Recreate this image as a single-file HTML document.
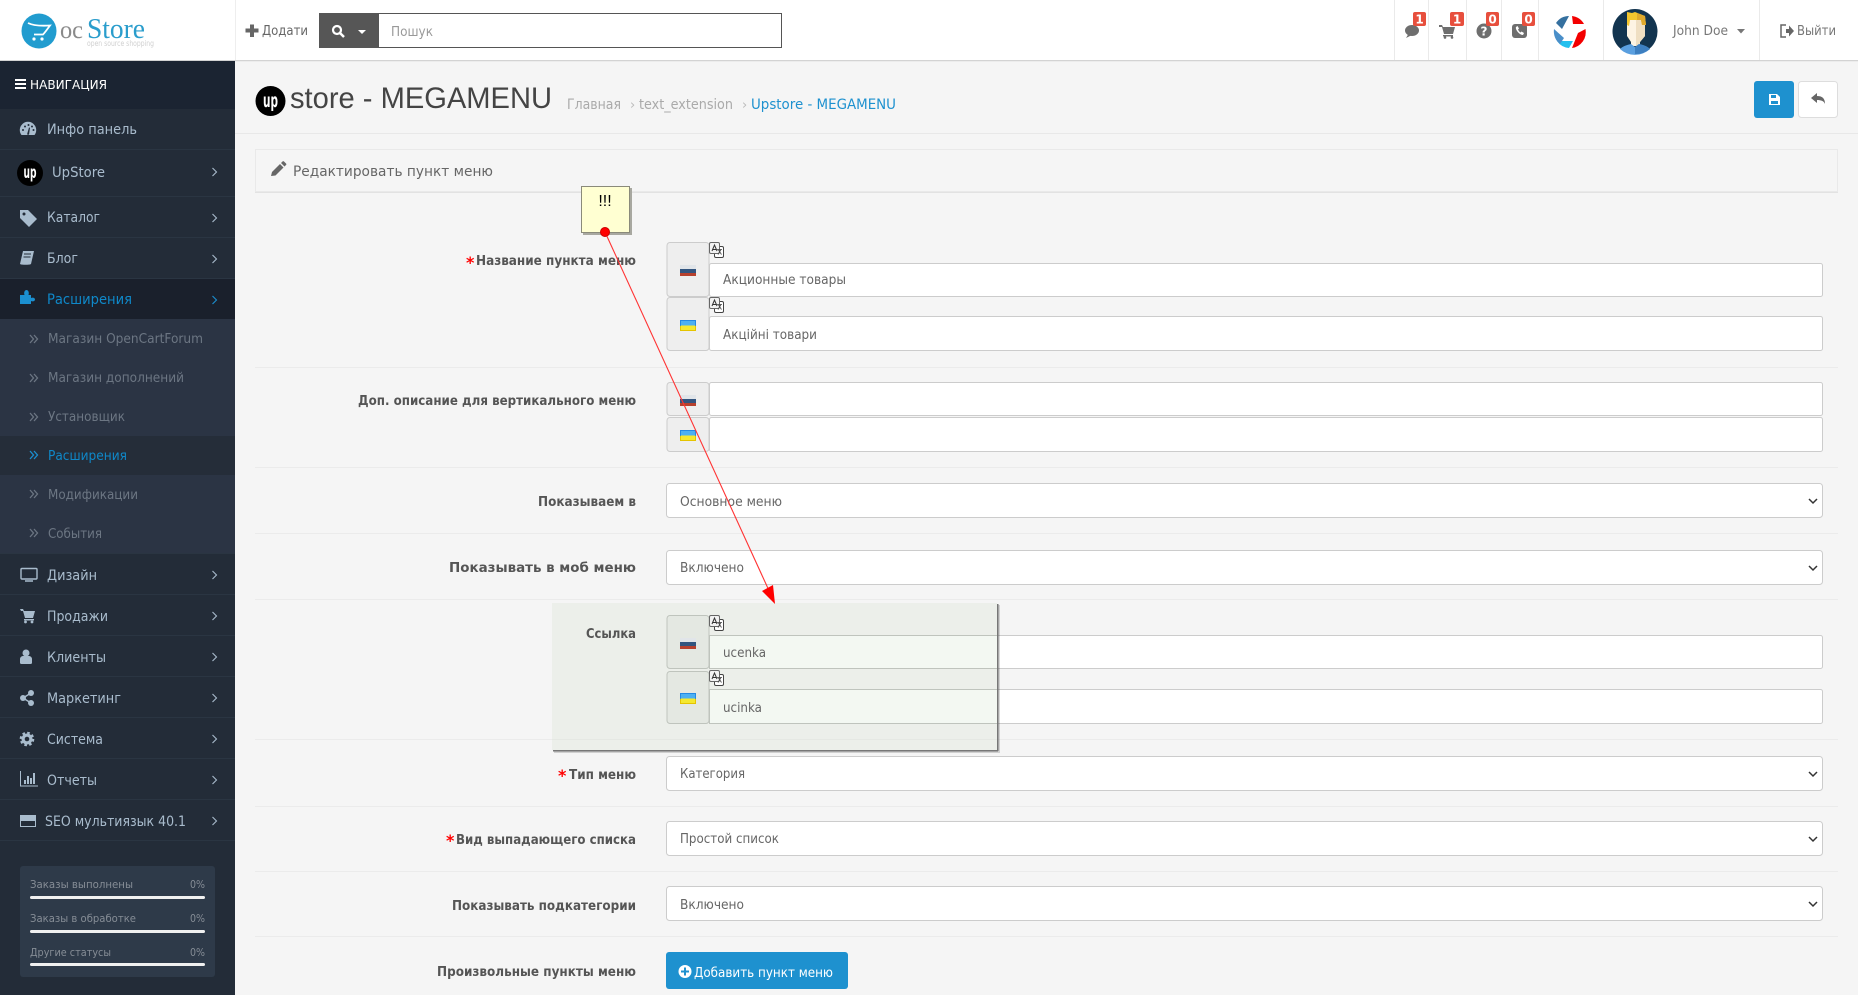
<!DOCTYPE html>
<html lang="ru">
<head>
<meta charset="utf-8">
<title>Upstore - MEGAMENU</title>
<style>
html,body{margin:0;padding:0;width:1858px;height:995px;overflow:hidden;background:#f5f5f5}
svg{display:block}
text{font-family:"DejaVu Sans","Liberation Sans",sans-serif;font-size:13px;fill:#666}
.m{font-size:14px;fill:#a9bccd}
.s{font-size:13px;fill:#6c7683}
.st{font-size:11px;fill:#868d96}
.b{font-weight:bold;font-size:13px;fill:#555}
.r{font-weight:bold;font-size:16px;fill:#f00}
.f{font-size:13px;fill:#666}
.bd{font-size:12px;font-weight:bold;fill:#fff}
.i{fill:#a9bccd}
.h{fill:#6e6e6e}
.inp{fill:#fff;stroke:#ccc}
.ad{fill:#eee;stroke:#ccc}
.sep{fill:#eaeaea}
.ms{fill:#2a3542}
.chev{fill:none;stroke:#a9bccd;stroke-width:1.1}
.ddd{fill:none;stroke:#6c7683;stroke-width:1.3}
</style>
</head>
<body>
<svg xmlns="http://www.w3.org/2000/svg" width="1858" height="995" viewBox="0 0 1858 995">
<defs>
<g id="ru"><rect width="16" height="4" fill="#e1e5e9"/><rect y="4" width="16" height="4" fill="#33557f"/><rect y="8" width="16" height="3" fill="#b6412e"/></g>
<g id="ua"><rect width="16" height="11" fill="#f4e82f"/><rect width="16" height="5.500" fill="#4cb0f2"/><rect x=".5" y=".5" width="15" height="10" fill="none" stroke="#1a7fe0" stroke-opacity=".8"/><path d="M.5 6v4.500h15V6" fill="none" stroke="#e5c400"/></g>
<g id="tr"><rect x="5.500" y="4.500" width="9" height="11" rx="1.500" fill="#fff" stroke="#444"/><rect x=".5" y=".5" width="10" height="11" rx="1.500" fill="#f2f2f2" stroke="#666"/><path d="M3 9l2.500-6 2.500 6M3.800 7.500h3.500" fill="none" stroke="#333"/><path d="M8 7.500h5M12 7.500l-3 5M9.500 8l3 4.500" fill="none" stroke="#444" stroke-width=".8"/></g>
<path id="sel" d="M0 0l4 4 4-4" fill="none" stroke="#333" stroke-width="1.500"/>
</defs>

<!-- page background -->
<rect width="1858" height="995" fill="#f5f5f5"/>

<!-- header -->
<g id="header">
<rect width="1858" height="60" fill="#fff"/>
<rect y="60" width="1858" height="1" fill="#d3d3d3"/>
<rect y="61" width="1858" height="1" fill="#ececec"/>
<rect x="235" width="1" height="60" fill="#eee"/>
<circle cx="39" cy="31" r="17.500" fill="#219ccf"/>
<path d="M28 23c6 3 14 3 22 2.500-3 4-5 7-7 9h-9" fill="none" stroke="#fff" stroke-width="1.800"/>
<circle cx="34" cy="39" r="1.600" fill="#fff"/><circle cx="42" cy="39" r="1.600" fill="#fff"/>
<text x="60" y="38" textLength="23" lengthAdjust="spacingAndGlyphs" style="font-family:'Liberation Serif',serif;font-size:25px;fill:#8a8a8a">oc</text>
<text x="87" y="38" textLength="58" lengthAdjust="spacingAndGlyphs" style="font-family:'Liberation Serif',serif;font-size:29px;fill:#2a9dcc">Store</text>
<text x="87" y="46" textLength="67" lengthAdjust="spacingAndGlyphs" style="font-size:8px;fill:#d0d0d0">open source shopping</text>

<path d="M250 25h4v4h4.500v4H254v4.500h-4V33h-4.500v-4h4.500z" transform="translate(0 -.5)" fill="#666"/>
<text x="262" y="35" textLength="46" lengthAdjust="spacingAndGlyphs" style="fill:#666">Додати</text>
<rect x="319" y="13" width="59" height="35" fill="#565656"/>
<rect x="378.500" y="13.500" width="403" height="34" fill="#fff" stroke="#555"/>
<circle cx="337" cy="30" r="4" fill="none" stroke="#fff" stroke-width="2.200"/><path d="M340 33l4 4" stroke="#fff" stroke-width="2.500"/>
<path d="M358 30h8l-4 4z" fill="#fff"/>
<text x="391" y="36" textLength="42" lengthAdjust="spacingAndGlyphs" style="fill:#999">Пошук</text>

<g class="sep">
<rect x="1394" width="1" height="60"/><rect x="1428" width="1" height="60"/><rect x="1466" width="1" height="60"/><rect x="1501" width="1" height="60"/><rect x="1538" width="1" height="60"/><rect x="1603" width="1" height="60"/><rect x="1759" width="1" height="60"/>
</g>
<ellipse class="h" cx="1412" cy="30.500" rx="7" ry="5.500"/><path class="h" d="M1406 38l3-5 3 2z"/>
<path class="h" d="M1439 25h3l1 2h12l-2 7h-9l-2-7h-3z"/><rect class="h" x="1443" y="35" width="10" height="1.500"/><circle class="h" cx="1445" cy="37.500" r="1.300"/><circle class="h" cx="1452" cy="37.500" r="1.300"/>
<circle class="h" cx="1484" cy="31" r="7.500"/>
<text x="1484" y="35.500" text-anchor="middle" style="font-size:12px;font-weight:bold;fill:#fff">?</text>
<rect class="h" x="1512" y="24" width="15" height="14" rx="3"/>
<path d="M1516 27c-1 2 3 8 7 8l1-2-2.500-1.500-1 1c-1-.5-2-2-2.500-3l1-1-1.500-2.500z" fill="#fff"/>
<g fill="#e74f3d">
<rect x="1413" y="12" width="13" height="14" rx="2"/><rect x="1450" y="12" width="14" height="14" rx="2"/><rect x="1486" y="12" width="13" height="14" rx="2"/><rect x="1522" y="12" width="13" height="14" rx="2"/>
</g>
<text class="bd" x="1419.500" y="23.500" text-anchor="middle">1</text>
<text class="bd" x="1457" y="23.500" text-anchor="middle">1</text>
<text class="bd" x="1492.500" y="23.500" text-anchor="middle">0</text>
<text class="bd" x="1528.500" y="23.500" text-anchor="middle">0</text>

<!-- aperture logo -->
<path d="M1572 16A16 16 0 0 1 1584 24L1573 24Z" fill="#f30000"/>
<path d="M1585.500 29A16 16 0 0 1 1572 48L1578 33Z" fill="#f30000"/>
<path d="M1557 41L1573 41L1569 48A16 16 0 0 1 1557 41Z" fill="#24c0ee"/>
<path d="M1554 29L1564 38L1560 44A16 16 0 0 1 1554 29Z" fill="#4a8fc9"/>
<path d="M1556 23A16 16 0 0 1 1569 16L1562 29Z" fill="#35709f"/>

<!-- avatar -->
<circle cx="1635" cy="31.500" r="22.500" fill="#12344f"/>
<path d="M1627 17h18v19l-5 6v4h-9v-4l-4-6z" fill="#fdf4e3"/>
<path d="M1636 17h9v19l-5 6v4h-4z" fill="#efdfc2"/>
<path d="M1627 12l5 1 3-1 10 4 1 9h-4l-1-5-11 0-1 6-2-1z" fill="#f3c62e"/>
<path d="M1637 13l8 3 1 9h-4l-1-5h-4z" fill="#dfa92c"/>
<path d="M1620 49c3-3 7-4 11-5l4 3 4-3c4 1 8 2 11 5a22 22 0 0 1-30 0z" fill="#5a9fdf"/>
<path d="M1635 47l4-3c4 1 8 2 11 5a22 22 0 0 1-15 5z" fill="#3d7fc0"/>

<text x="1673" y="35" textLength="55" lengthAdjust="spacingAndGlyphs" style="fill:#777">John Doe</text>
<path d="M1737 29h8l-4 4.500z" fill="#777"/>
<path d="M1786 25h-5v12h5" fill="none" stroke="#666" stroke-width="1.500"/><path d="M1786 29h3v-3.500l5 5.500-5 5.500V33h-3z" fill="#666"/>
<text x="1797" y="35" textLength="39" lengthAdjust="spacingAndGlyphs" style="fill:#777">Выйти</text>
</g>

<!-- sidebar -->
<g id="sidebar">
<rect x="0" y="61" width="235" height="934" fill="#232c38"/>
<rect x="0" y="61" width="235" height="48" fill="#1b2432"/>
<rect x="15" y="79" width="11" height="2" fill="#fff"/><rect x="15" y="83" width="11" height="2" fill="#fff"/><rect x="15" y="87" width="11" height="2" fill="#fff"/>
<text x="30" y="89" textLength="77" lengthAdjust="spacingAndGlyphs" style="fill:#fff;font-size:12.500px">НАВИГАЦИЯ</text>

<rect class="ms" y="149" width="235" height="1"/><rect class="ms" y="196" width="235" height="1"/><rect class="ms" y="237" width="235" height="1"/><rect class="ms" y="278" width="235" height="1"/>
<rect y="279" width="235" height="40" fill="#1a202c"/>
<rect y="319" width="235" height="234" fill="#2b3444"/>
<rect y="436" width="235" height="39" fill="#252d39"/>
<rect class="ms" y="553" width="235" height="1"/><rect class="ms" y="594" width="235" height="1"/><rect class="ms" y="635" width="235" height="1"/><rect class="ms" y="676" width="235" height="1"/><rect class="ms" y="717" width="235" height="1"/><rect class="ms" y="758" width="235" height="1"/><rect class="ms" y="799" width="235" height="1"/><rect class="ms" y="840" width="235" height="1"/>

<!-- gauge -->
<path class="i" d="M21.500 135A8.200 8.200 0 1 1 34.500 135Z"/>
<g fill="#232c38"><circle cx="23" cy="130" r="1"/><circle cx="25" cy="126.500" r="1"/><circle cx="28.500" cy="125" r="1"/><circle cx="32" cy="126.500" r="1"/><circle cx="33.500" cy="130" r="1"/><path d="M27 134.500l2-7 1 .3-1 7z"/></g>
<text class="m" x="47" y="134" textLength="90" lengthAdjust="spacingAndGlyphs">Инфо панель</text>

<circle cx="30" cy="173" r="13" fill="#000"/>
<text x="30" y="178" text-anchor="middle" textLength="13" lengthAdjust="spacingAndGlyphs" style="fill:#fff;font-weight:bold;font-size:17px">up</text>
<text class="m" x="52" y="177" textLength="53" lengthAdjust="spacingAndGlyphs">UpStore</text>

<path class="i" d="M20 210h8l9 9-8 8-9-9z"/><circle cx="24" cy="214" r="1.500" fill="#232c38"/>
<text class="m" x="47" y="222" textLength="53" lengthAdjust="spacingAndGlyphs">Каталог</text>

<path class="i" d="M23 251h11l-3 13c-1 1-10 1-11 0z"/><path d="M24 254h7M23.500 257h7" stroke="#232c38"/>
<text class="m" x="47" y="263" textLength="31" lengthAdjust="spacingAndGlyphs">Блог</text>

<path d="M20 295h4.500c-1-3 .5-5 2-5s3 2 2 5h2.500v3c2-1 4 0 4 1.500s-2 2.500-4 1.500v3H20z" fill="#1b8fd0"/>
<text class="m" x="47" y="304" textLength="85" lengthAdjust="spacingAndGlyphs" style="fill:#0f88c9">Расширения</text>

<g class="chev">
<path d="M212.500 168l4 4-4 4"/><path d="M212.500 214l4 4-4 4"/><path d="M212.500 255l4 4-4 4"/>
<path d="M212.500 571l4 4-4 4"/><path d="M212.500 612l4 4-4 4"/><path d="M212.500 653l4 4-4 4"/><path d="M212.500 694l4 4-4 4"/><path d="M212.500 735l4 4-4 4"/><path d="M212.500 776l4 4-4 4"/><path d="M212.500 817l4 4-4 4"/>
</g>
<path d="M212.500 296l4 4-4 4" fill="none" stroke="#1b8fd0" stroke-width="1.100"/>

<g class="ddd">
<path d="M30 335l3.500 4-3.500 4M34 335l3.500 4-3.500 4"/>
<path d="M30 374l3.500 4-3.500 4M34 374l3.500 4-3.500 4"/>
<path d="M30 413l3.500 4-3.500 4M34 413l3.500 4-3.500 4"/>
<path d="M30 451l3.500 4-3.500 4M34 451l3.500 4-3.500 4" stroke="#1b8fd0"/>
<path d="M30 490l3.500 4-3.500 4M34 490l3.500 4-3.500 4"/>
<path d="M30 529l3.500 4-3.500 4M34 529l3.500 4-3.500 4"/>
</g>
<text class="s" x="48" y="343" textLength="155" lengthAdjust="spacingAndGlyphs">Магазин OpenCartForum</text>
<text class="s" x="48" y="382" textLength="136" lengthAdjust="spacingAndGlyphs">Магазин дополнений</text>
<text class="s" x="48" y="421" textLength="77" lengthAdjust="spacingAndGlyphs">Установщик</text>
<text class="s" x="48" y="460" textLength="79" lengthAdjust="spacingAndGlyphs" style="fill:#0f88c9">Расширения</text>
<text class="s" x="48" y="499" textLength="90" lengthAdjust="spacingAndGlyphs">Модификации</text>
<text class="s" x="48" y="538" textLength="54" lengthAdjust="spacingAndGlyphs">События</text>

<rect x="21" y="568.500" width="16" height="10.500" rx="1" fill="none" stroke="#a9bccd" stroke-width="1.400"/><path d="M25 581h8" stroke="#a9bccd" stroke-width="1.500"/>
<text class="m" x="47" y="580" textLength="50" lengthAdjust="spacingAndGlyphs">Дизайн</text>

<path class="i" d="M20 609h3l1 2h11l-2 7h-8l-2-7h-2z"/><rect class="i" x="24" y="619" width="10" height="1.500"/><circle class="i" cx="25.500" cy="622" r="1.400"/><circle class="i" cx="32" cy="622" r="1.400"/>
<text class="m" x="47" y="621" textLength="61" lengthAdjust="spacingAndGlyphs">Продажи</text>

<circle class="i" cx="26" cy="653" r="3.500"/><path class="i" d="M20 664v-4c0-2 2-3 3-3h6c1 0 3 1 3 3v4c0 .7-1 1-2 1h-8c-1 0-2-.3-2-1z" transform="translate(0 -1)"/>
<text class="m" x="47" y="662" textLength="59" lengthAdjust="spacingAndGlyphs">Клиенты</text>

<circle class="i" cx="23" cy="698" r="3"/><circle class="i" cx="31" cy="693" r="3"/><circle class="i" cx="31" cy="703" r="3"/><path d="M23 698l8-5M23 698l8 5" stroke="#a9bccd" stroke-width="1.400"/>
<text class="m" x="47" y="703" textLength="74" lengthAdjust="spacingAndGlyphs">Маркетинг</text>

<circle class="i" cx="27" cy="739" r="5.500"/>
<circle cx="27" cy="739" r="6.200" fill="none" stroke="#a9bccd" stroke-width="2.200" stroke-dasharray="2.600 2.270"/>
<circle cx="27" cy="739" r="2.300" fill="#232c38"/>
<text class="m" x="47" y="744" textLength="56" lengthAdjust="spacingAndGlyphs">Система</text>

<path d="M20.500 771v15H38" fill="none" stroke="#a9bccd"/>
<g class="i"><rect x="24" y="780" width="2" height="4"/><rect x="27" y="776" width="2" height="8"/><rect x="30" y="778" width="2" height="6"/><rect x="33" y="773" width="2" height="11"/></g>
<text class="m" x="47" y="785" textLength="50" lengthAdjust="spacingAndGlyphs">Отчеты</text>

<rect x="20" y="815" width="16" height="6" fill="#a9bccd"/><rect x="20.500" y="815.500" width="15" height="11" fill="none" stroke="#a9bccd"/>
<text class="m" x="45" y="826" textLength="141" lengthAdjust="spacingAndGlyphs">SEO мультиязык 40.1</text>

<rect x="20" y="866" width="195" height="111" rx="3" fill="#2e3a49"/>
<text class="st" x="30" y="888" textLength="103" lengthAdjust="spacingAndGlyphs">Заказы выполнены</text>
<text class="st" x="190" y="888" textLength="15" lengthAdjust="spacingAndGlyphs">0%</text>
<rect x="30" y="896" width="175" height="3" rx="1.500" fill="#f0f0f0"/>
<text class="st" x="30" y="922" textLength="106" lengthAdjust="spacingAndGlyphs">Заказы в обработке</text>
<text class="st" x="190" y="922" textLength="15" lengthAdjust="spacingAndGlyphs">0%</text>
<rect x="30" y="930" width="175" height="3" rx="1.500" fill="#f0f0f0"/>
<text class="st" x="30" y="956" textLength="81" lengthAdjust="spacingAndGlyphs">Другие статусы</text>
<text class="st" x="190" y="956" textLength="15" lengthAdjust="spacingAndGlyphs">0%</text>
<rect x="30" y="963" width="175" height="3" rx="1.500" fill="#f0f0f0"/>
</g>

<!-- page header -->
<g id="pagehead">
<rect x="235" y="133" width="1623" height="1" fill="#e8e8e8"/>
<circle cx="270.500" cy="101" r="15" fill="#000"/>
<text x="270.500" y="107" text-anchor="middle" textLength="15" lengthAdjust="spacingAndGlyphs" style="fill:#fff;font-weight:bold;font-size:19px">up</text>
<text x="290" y="108" textLength="262" lengthAdjust="spacingAndGlyphs" style="font-family:'Liberation Sans',sans-serif;font-size:30px;fill:#444">store - MEGAMENU</text>
<text x="567" y="109" textLength="54" lengthAdjust="spacingAndGlyphs" style="font-size:14px;fill:#aaa">Главная</text>
<text x="630" y="109" style="font-size:13px;fill:#bbb">›</text>
<text x="639" y="109" textLength="94" lengthAdjust="spacingAndGlyphs" style="font-size:14px;fill:#aaa">text_extension</text>
<text x="742" y="109" style="font-size:13px;fill:#bbb">›</text>
<text x="751" y="109" textLength="145" lengthAdjust="spacingAndGlyphs" style="font-size:14px;fill:#1e91cf">Upstore - MEGAMENU</text>

<rect x="1754" y="81" width="40" height="37" rx="3" fill="#1e91cf"/>
<path d="M1769 94h8l3 3v8h-11z" fill="#fff"/><rect x="1771" y="95" width="5" height="3" fill="#1e91cf"/><rect x="1771" y="101" width="7" height="3" fill="#1e91cf"/>
<rect x="1798.500" y="81.500" width="39" height="36" rx="3" fill="#fff" stroke="#ddd"/>
<path d="M1811 98l6-5v3c5 0 8 2 8 8-1-3-4-4-8-4v3z" fill="#666"/>
</g>

<!-- panel heading -->
<rect x="255.500" y="149.500" width="1582" height="42" fill="#f5f5f5" stroke="#e9e9e9"/>
<rect x="255" y="192" width="1583" height="1" fill="#e2e2e2"/>
<path d="M271 177l1-4 8-8 3.500 3.500-8 8zM281 164l1.500-1.500c.5-.5 1-.5 1.500 0l2 2c.5.5.5 1 0 1.500l-1.500 1.500z" fill="#666" transform="translate(0 -1)"/>
<text x="293" y="176" textLength="200" lengthAdjust="spacingAndGlyphs" style="font-size:14px;fill:#666">Редактировать пункт меню</text>

<!-- form separators -->
<g fill="#ebebeb">
<rect x="255" y="367" width="1583" height="1"/><rect x="255" y="467" width="1583" height="1"/><rect x="255" y="533" width="1583" height="1"/><rect x="255" y="599" width="1583" height="1"/><rect x="255" y="739" width="1583" height="1"/><rect x="255" y="806" width="1583" height="1"/><rect x="255" y="871" width="1583" height="1"/><rect x="255" y="936" width="1583" height="1"/>
</g>

<!-- labels -->
<text class="r" x="466" y="268">*</text>
<text class="b" x="476" y="265" textLength="160" lengthAdjust="spacingAndGlyphs">Название пункта меню</text>
<text class="b" x="358" y="405" textLength="278" lengthAdjust="spacingAndGlyphs">Доп. описание для вертикального меню</text>
<text class="b" x="538" y="506" textLength="98" lengthAdjust="spacingAndGlyphs">Показываем в</text>
<text class="b" x="449" y="572" textLength="187" lengthAdjust="spacingAndGlyphs">Показывать в моб меню</text>
<text class="b" x="586" y="638" textLength="50" lengthAdjust="spacingAndGlyphs">Ссылка</text>
<text class="r" x="558" y="781">*</text>
<text class="b" x="569" y="779" textLength="67" lengthAdjust="spacingAndGlyphs">Тип меню</text>
<text class="r" x="446" y="846">*</text>
<text class="b" x="456" y="844" textLength="180" lengthAdjust="spacingAndGlyphs">Вид выпадающего списка</text>
<text class="b" x="452" y="910" textLength="184" lengthAdjust="spacingAndGlyphs">Показывать подкатегории</text>
<text class="b" x="437" y="976" textLength="199" lengthAdjust="spacingAndGlyphs">Произвольные пункты меню</text>

<!-- Название -->
<rect class="ad" x="667" y="242.500" width="42" height="54" rx="3"/>
<rect class="inp" x="709.500" y="263.500" width="1113" height="33" rx="2"/>
<rect class="ad" x="667" y="297.500" width="42" height="53" rx="3"/>
<rect class="inp" x="709.500" y="316.500" width="1113" height="34" rx="2"/>
<use href="#ru" x="680" y="265"/><use href="#ua" x="680" y="320"/>
<use href="#tr" x="709" y="242"/><use href="#tr" x="709" y="297"/>
<text class="f" x="723" y="284" textLength="123" lengthAdjust="spacingAndGlyphs">Акционные товары</text>
<text class="f" x="723" y="339" textLength="94" lengthAdjust="spacingAndGlyphs">Акційні товари</text>

<!-- Доп описание -->
<rect class="ad" x="667" y="382.500" width="42" height="33" rx="3"/>
<rect class="inp" x="709.500" y="382.500" width="1113" height="33" rx="2"/>
<rect class="ad" x="667" y="417.500" width="42" height="34" rx="3"/>
<rect class="inp" x="709.500" y="417.500" width="1113" height="34" rx="2"/>
<use href="#ru" x="680" y="395"/><use href="#ua" x="680" y="430"/>

<!-- selects -->
<rect class="inp" x="666.500" y="483.500" width="1156" height="34" rx="3"/>
<text class="f" x="680" y="506" textLength="102" lengthAdjust="spacingAndGlyphs">Основное меню</text>
<use href="#sel" x="1809" y="499"/>
<rect class="inp" x="666.500" y="550.500" width="1156" height="34" rx="3"/>
<text class="f" x="680" y="572" textLength="64" lengthAdjust="spacingAndGlyphs">Включено</text>
<use href="#sel" x="1809" y="566"/>

<!-- Ссылка -->
<rect class="inp" x="709.500" y="635.500" width="1113" height="33" rx="2"/>
<rect class="inp" x="709.500" y="689.500" width="1113" height="34" rx="2"/>

<rect class="inp" x="666.500" y="756.500" width="1156" height="34" rx="3"/>
<text class="f" x="680" y="778" textLength="65" lengthAdjust="spacingAndGlyphs">Категория</text>
<use href="#sel" x="1809" y="772"/>
<rect class="inp" x="666.500" y="821.500" width="1156" height="34" rx="3"/>
<text class="f" x="680" y="843" textLength="99" lengthAdjust="spacingAndGlyphs">Простой список</text>
<use href="#sel" x="1809" y="837"/>
<rect class="inp" x="666.500" y="886.500" width="1156" height="34" rx="3"/>
<text class="f" x="680" y="909" textLength="64" lengthAdjust="spacingAndGlyphs">Включено</text>
<use href="#sel" x="1809" y="902"/>

<!-- add button -->
<rect x="666" y="952" width="182" height="37" rx="3" fill="#1e91cf"/>
<circle cx="685" cy="971.500" r="6.500" fill="#fff"/><path d="M681 971.500h8M685 967.500v8" stroke="#1e91cf" stroke-width="2"/>
<text x="694" y="977" textLength="139" lengthAdjust="spacingAndGlyphs" style="fill:#fff">Добавить пункт меню</text>

<!-- annotation overlay -->
<rect x="554" y="605" width="446" height="148" fill="#000" fill-opacity=".15"/>
<g>
<rect x="552" y="603" width="445" height="147" fill="#ecefea"/>
<rect x="667" y="615.500" width="42" height="53" rx="3" fill="#e4e8e2" stroke="#bfc4bd"/>
<rect x="709.500" y="635.500" width="288" height="33" fill="#f3f8f2" stroke="#bfc4bd"/>
<rect x="667" y="671.500" width="42" height="52" rx="3" fill="#e4e8e2" stroke="#bfc4bd"/>
<rect x="709.500" y="689.500" width="288" height="34" fill="#f3f8f2" stroke="#bfc4bd"/>
<use href="#ru" x="680" y="638"/><use href="#ua" x="680" y="693"/>
<use href="#tr" x="709" y="615"/><use href="#tr" x="709" y="670"/>
<text x="586" y="638" class="b" textLength="50" lengthAdjust="spacingAndGlyphs">Ссылка</text>
<text class="f" x="723" y="657" textLength="43" lengthAdjust="spacingAndGlyphs">ucenka</text>
<text class="f" x="723" y="712" textLength="39" lengthAdjust="spacingAndGlyphs">ucinka</text>
<rect x="552" y="739" width="445" height="1" fill="#e5e8e3"/>
</g>
<rect x="997" y="604" width="1.500" height="147" fill="#777"/>
<rect x="553" y="750" width="445" height="1.500" fill="#777"/>

<!-- note and arrow -->
<rect x="583" y="188" width="49" height="47" fill="#a8a8a0"/>
<rect x="581.500" y="186.500" width="48" height="46" fill="#ffffd2" stroke="#8a8a7a"/>
<text x="605" y="206" text-anchor="middle" style="font-family:'Liberation Sans',sans-serif;font-size:16px;fill:#000">!!!</text>
<line x1="605" y1="232" x2="771" y2="595" stroke="#f33" stroke-width="1.100"/>
<circle cx="605" cy="232" r="4.500" fill="#f00" stroke="#c00"/>
<path d="M775 604l-13-13 11-6z" fill="#f00"/>
</svg>
</body>
</html>
